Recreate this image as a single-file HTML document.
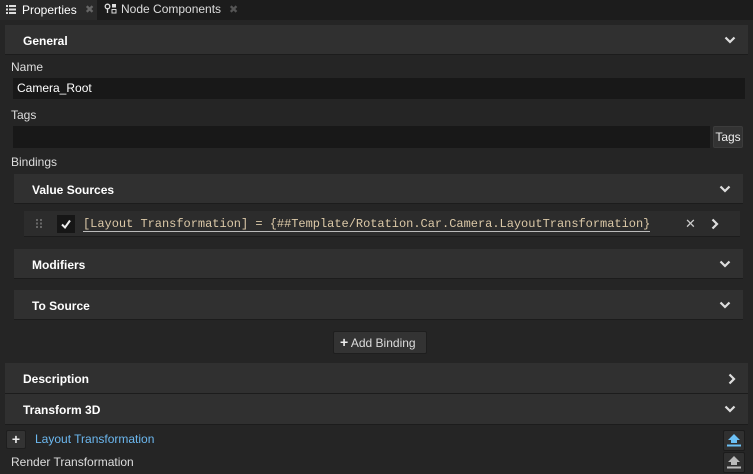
<!DOCTYPE html>
<html><head><style>
*{box-sizing:border-box;margin:0;padding:0}
body{width:753px;height:474px;overflow:hidden;background:#252525;font-family:"Liberation Sans",sans-serif;font-size:12px;color:#e0e0e0;position:relative}
.a{position:absolute}
.hdr{position:absolute;background:#303030;border-bottom:1px solid #1c1c1c;font-weight:bold;color:#fff;font-size:12px;padding-left:18px;padding-top:2px;display:flex;align-items:center}
.chev{position:absolute;right:12px;top:50%;width:12px;height:8px;margin-top:-4px}
.inp{position:absolute;background:#181818}
.lbl{position:absolute;color:#ddd}
</style></head><body>
<div class="a" style="left:0;top:0;width:753px;height:20px;background:#1c1c1c"></div>
<div class="a" style="left:0;top:0;width:97px;height:20px;background:#2a2a2a"></div>
<svg class="a" style="left:6px;top:5px" width="10" height="9"><rect x="0" y="0" width="2" height="2" fill="#ddd"/><rect x="3" y="0" width="7" height="2" fill="#ddd"/><rect x="0" y="3.5" width="2" height="2" fill="#ddd"/><rect x="3" y="3.5" width="7" height="2" fill="#ddd"/><rect x="0" y="7" width="2" height="2" fill="#ddd"/><rect x="3" y="7" width="7" height="2" fill="#ddd"/></svg>
<div class="a" style="left:22px;top:3px;color:#fff">Properties</div>
<div class="a" style="left:85px;top:3px;color:#666;font-size:11px">✖</div>
<svg class="a" style="left:104px;top:3px" width="14" height="12"><circle cx="3.5" cy="3.5" r="2.3" fill="none" stroke="#ddd" stroke-width="1.3"/><line x1="3.5" y1="6" x2="3.5" y2="10" stroke="#ddd" stroke-width="1.3"/><rect x="8" y="1" width="4" height="3.5" fill="#ddd"/><rect x="8" y="6.5" width="4" height="3.5" fill="none" stroke="#ddd"/></svg>
<div class="a" style="left:121px;top:2px;color:#ddd">Node Components</div>
<div class="a" style="left:229px;top:3px;color:#555;font-size:11px">✖</div>

<div class="hdr" style="left:5px;top:25px;width:743px;height:30px">General<svg class="chev" viewBox="0 0 12 8"><path d="M1.5 1.5L6 6 10.5 1.5" fill="none" stroke="#ddd" stroke-width="2.2"/></svg></div>
<div class="lbl" style="left:11px;top:60px">Name</div>
<div class="inp" style="left:13px;top:78px;width:732px;height:21px"></div>
<div class="a" style="left:17px;top:81px;color:#fff">Camera_Root</div>
<div class="lbl" style="left:11px;top:108px">Tags</div>
<div class="inp" style="left:13px;top:126px;width:697px;height:22px"></div>
<div class="a" style="left:713px;top:126px;width:30px;height:22px;background:#333;border:1px solid #3c3c3c;border-radius:2px;color:#eee;font-size:12px;text-align:center;line-height:20px">Tags</div>
<div class="lbl" style="left:11px;top:155px">Bindings</div>

<div class="hdr" style="left:14px;top:174px;width:729px;height:30px">Value Sources<svg class="chev" viewBox="0 0 12 8"><path d="M1.5 1.5L6 6 10.5 1.5" fill="none" stroke="#ddd" stroke-width="2.2"/></svg></div>
<div class="a" style="left:24px;top:211px;width:716px;height:26px;background:#2c2c2c;border-bottom:1px solid #1c1c1c"></div>
<svg class="a" style="left:36px;top:219px" width="6" height="9"><g fill="#666"><rect x="0" y="0" width="2" height="2"/><rect x="4" y="0" width="2" height="2"/><rect x="0" y="3.5" width="2" height="2"/><rect x="4" y="3.5" width="2" height="2"/><rect x="0" y="7" width="2" height="2"/><rect x="4" y="7" width="2" height="2"/></g></svg>
<div class="a" style="left:57px;top:215px;width:18px;height:18px;background:#161616"></div>
<svg class="a" style="left:60px;top:218px" width="12" height="12"><path d="M2 6.5L5 9.5 10 2.5" fill="none" stroke="#eee" stroke-width="2"/></svg>
<div class="a" style="left:83px;top:217px;font-family:'Liberation Mono',monospace;font-size:12px;color:#dcc9a8;border-bottom:1px solid #bbb;line-height:14px;white-space:nowrap;letter-spacing:-0.02px">[Layout Transformation] = {##Template/Rotation.Car.Camera.LayoutTransformation}</div>
<div class="a" style="left:685px;top:216px;color:#ccc;font-size:13px">✕</div>
<svg class="a" style="left:711px;top:218px" width="8" height="12"><path d="M1.5 1.5L6 6 1.5 10.5" fill="none" stroke="#ddd" stroke-width="2.2"/></svg>

<div class="hdr" style="left:14px;top:249px;width:729px;height:30px">Modifiers<svg class="chev" viewBox="0 0 12 8"><path d="M1.5 1.5L6 6 10.5 1.5" fill="none" stroke="#ddd" stroke-width="2.2"/></svg></div>
<div class="hdr" style="left:14px;top:290px;width:729px;height:30px">To Source<svg class="chev" viewBox="0 0 12 8"><path d="M1.5 1.5L6 6 10.5 1.5" fill="none" stroke="#ddd" stroke-width="2.2"/></svg></div>

<div class="a" style="left:333px;top:331px;width:94px;height:23px;background:#333;border:1px solid #1e1e1e;border-radius:2px;color:#ddd;line-height:21px;padding-left:6px"><b style="font-size:14px;color:#eee">+</b> Add Binding</div>

<div class="hdr" style="left:5px;top:363px;width:743px;height:31px">Description<svg class="a" style="right:12px;top:10px" width="8" height="12"><path d="M1.5 1.5L6 6 1.5 10.5" fill="none" stroke="#ddd" stroke-width="2.2"/></svg></div>
<div class="hdr" style="left:5px;top:394px;width:743px;height:31px">Transform 3D<svg class="chev" viewBox="0 0 12 8"><path d="M1.5 1.5L6 6 10.5 1.5" fill="none" stroke="#ddd" stroke-width="2.2"/></svg></div>

<div class="a" style="left:6px;top:430px;width:20px;height:19px;background:#333;border:1px solid #1e1e1e;border-radius:2px;color:#eee;font-weight:bold;font-size:14px;text-align:center;line-height:16px">+</div>
<div class="a" style="left:35px;top:432px;color:#6cb8f0">Layout Transformation</div>
<div class="a" style="left:11px;top:455px;color:#ddd">Render Transformation</div>
<div class="a" style="left:723px;top:430px;width:22px;height:21px;background:#303030;border:1px solid #1c1c1c;border-radius:2px"></div>
<svg class="a" style="left:727px;top:434px" width="14" height="13"><path d="M7 0L13 6H10V9H4V6H1Z" fill="#6cc0f5"/><rect x="0" y="10.5" width="14" height="2" fill="#6cc0f5"/></svg>
<div class="a" style="left:723px;top:452px;width:22px;height:21px;background:#303030;border:1px solid #1c1c1c;border-radius:2px"></div>
<svg class="a" style="left:727px;top:456px" width="14" height="13"><path d="M7 0L13 6H10V9H4V6H1Z" fill="#bbb"/><rect x="0" y="10.5" width="14" height="2" fill="#bbb"/></svg>
</body></html>
